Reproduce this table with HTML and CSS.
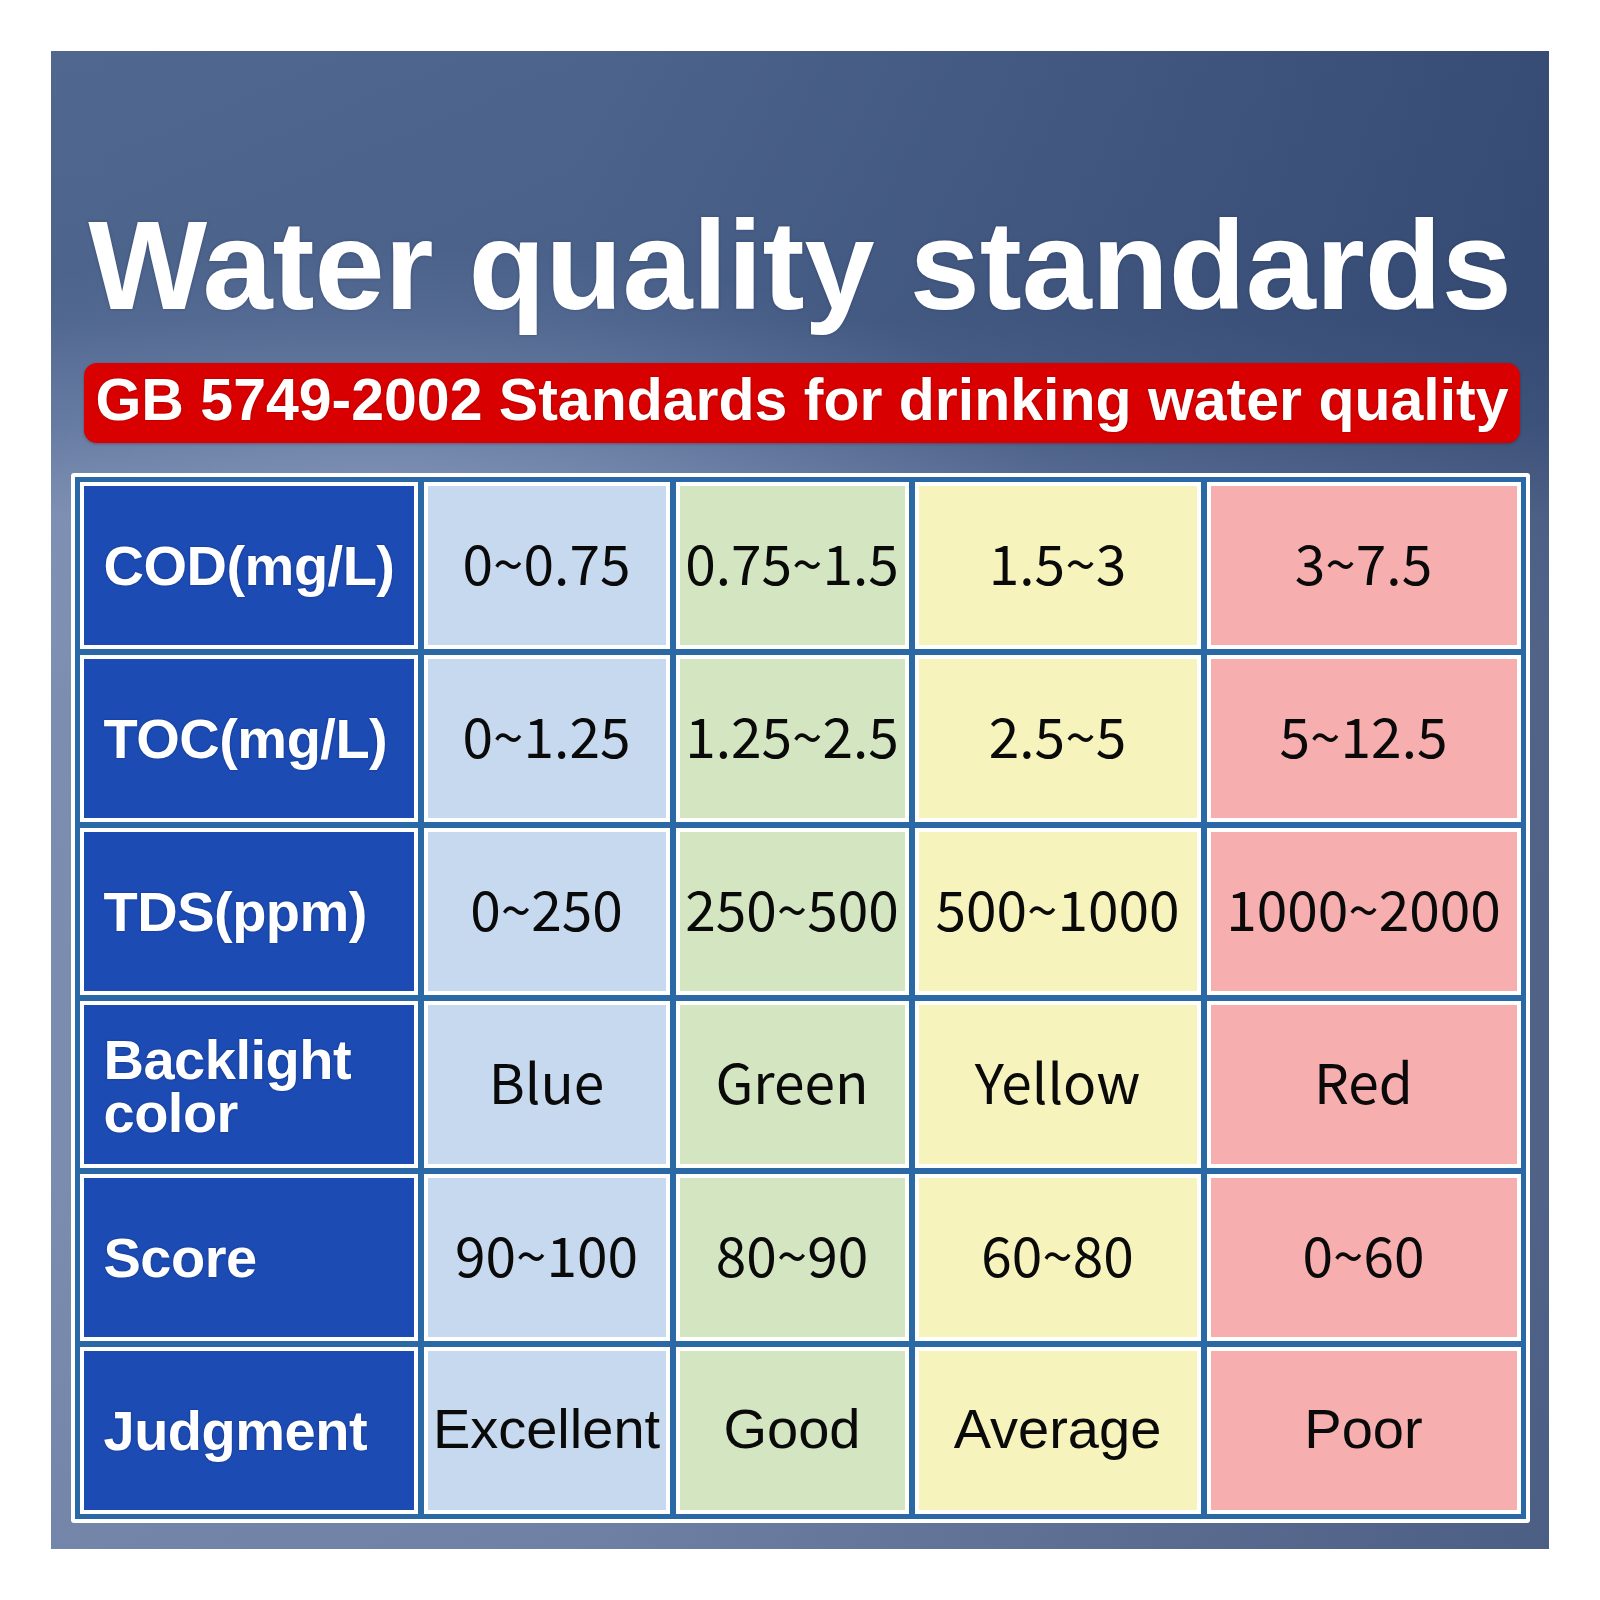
FILE: index.html
```html
<!DOCTYPE html>
<html lang="en">
<head>
<meta charset="utf-8">
<title>Water quality standards</title>
<link rel="stylesheet" href="styles.css">
</head>
<body>
<div class="panel">
  <h1 class="title">Water quality standards</h1>
  <div class="banner">GB 5749-2002 Standards for drinking water quality</div>
  <div class="table-frame">
    <div class="grid">
      <div class="cell head">COD(mg/L)</div>
      <div class="cell c-blue num">0~0.75</div>
      <div class="cell c-green num">0.75~1.5</div>
      <div class="cell c-yellow num">1.5~3</div>
      <div class="cell c-red num">3~7.5</div>

      <div class="cell head">TOC(mg/L)</div>
      <div class="cell c-blue num">0~1.25</div>
      <div class="cell c-green num">1.25~2.5</div>
      <div class="cell c-yellow num">2.5~5</div>
      <div class="cell c-red num">5~12.5</div>

      <div class="cell head">TDS(ppm)</div>
      <div class="cell c-blue num">0~250</div>
      <div class="cell c-green num">250~500</div>
      <div class="cell c-yellow num">500~1000</div>
      <div class="cell c-red num">1000~2000</div>

      <div class="cell head two"><span class="line">Backlight</span><span class="line">color</span></div>
      <div class="cell c-blue num">Blue</div>
      <div class="cell c-green num">Green</div>
      <div class="cell c-yellow num">Yellow</div>
      <div class="cell c-red num">Red</div>

      <div class="cell head">Score</div>
      <div class="cell c-blue num">90~100</div>
      <div class="cell c-green num">80~90</div>
      <div class="cell c-yellow num">60~80</div>
      <div class="cell c-red num">0~60</div>

      <div class="cell head">Judgment</div>
      <div class="cell c-blue word">Excellent</div>
      <div class="cell c-green word">Good</div>
      <div class="cell c-yellow word">Average</div>
      <div class="cell c-red word">Poor</div>
    </div>
  </div>
</div>
</body>
</html>
```
FILE: styles.css
```css
html, body {
  margin: 0;
  padding: 0;
  background: #ffffff;
}

.panel {
  box-sizing: border-box;
  width: 1498px;
  height: 1498px;
  margin: 51px;
  padding-top: 152px;
  display: flex;
  flex-direction: column;
  align-items: center;
  background:
    radial-gradient(ellipse 45% 16% at 22% 29%, rgba(165, 182, 212, 0.35), rgba(165, 182, 212, 0) 100%),
    linear-gradient(90deg, rgba(20, 40, 80, 0) 0%, rgba(20, 40, 80, 0.05) 35%, rgba(20, 40, 80, 0.42) 100%),
    linear-gradient(180deg, #50678f 0%, #4c638c 18%, #5a7099 25%, #7487ab 31%, #7c8eb0 40%, #7b8daf 75%, #7385a8 100%);
}

.title {
  margin: 0;
  font-family: "Liberation Sans", Arial, sans-serif;
  font-weight: bold;
  font-size: 126px;
  line-height: 126px;
  color: #ffffff;
  text-align: center;
  white-space: nowrap;
  text-shadow: 0 0 3px rgba(30, 45, 80, 0.45);
}

.banner {
  box-sizing: border-box;
  margin-top: 34px;
  margin-left: 4px;
  width: 1436px;
  height: 80px;
  border-radius: 13px;
  background: #d80000;
  color: #ffffff;
  font-family: "Liberation Sans", Arial, sans-serif;
  font-weight: bold;
  font-size: 59px;
  line-height: 74px;
  text-align: center;
  white-space: nowrap;
  text-shadow: 0 0 2px rgba(110, 0, 0, 0.7);
  box-shadow: 0 1px 3px rgba(80, 0, 0, 0.35);
}

.table-frame {
  margin-top: 30px;
  width: 1459px;
  box-sizing: border-box;
  padding: 4px;
  background: #ffffff;
  border-radius: 3px;
}

.grid {
  display: grid;
  grid-template-columns: 338px 246px 233px 286px 314px;
  grid-auto-rows: 167px;
  gap: 6px;
  padding: 5px;
  background: #2a69a6;
}

.cell {
  box-sizing: border-box;
  border: 4px solid #ffffff;
  display: flex;
  align-items: center;
  justify-content: center;
  white-space: nowrap;
  color: #0a0a0a;
  overflow: visible;
}

.head {
  justify-content: flex-start;
  padding-left: 20px;
  background: #1c4bb3;
  color: #ffffff;
  font-family: "Liberation Sans", Arial, sans-serif;
  font-weight: bold;
  font-size: 56px;
  letter-spacing: -0.5px;
  text-shadow: 0 0 2px rgba(10, 30, 90, 0.6);
}

.head.two {
  flex-direction: column;
  align-items: flex-start;
  justify-content: center;
  padding-bottom: 8px;
}

.head.two .line {
  display: block;
  height: 53px;
  line-height: 64px;
}

.num {
  font-family: "Noto Sans CJK SC", "Noto Sans", sans-serif;
  font-size: 55px;
  padding-bottom: 10px;
}

.word {
  font-family: "Liberation Sans", Arial, sans-serif;
  font-size: 56px;
  padding-bottom: 4px;
}

.c-blue { background: #c7d9ee; }
.c-green { background: #d3e5c1; }
.c-yellow { background: #f6f3bd; }
.c-red { background: #f6aeae; }
```
